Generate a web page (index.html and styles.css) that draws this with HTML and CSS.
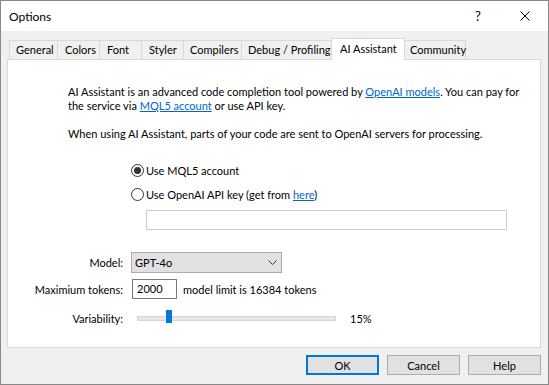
FILE: index.html
```html
<!DOCTYPE html>
<html>
<head>
<meta charset="utf-8">
<title>Options</title>
<link rel="stylesheet" href="styles.css">
</head>
<body>
<div class="window">
  <div class="titlebar">
    <span class="title">Options</span>
    <div class="tb-btns">
      <span class="tb-btn tb-help">?</span>
      <span class="tb-btn">
        <svg width="10" height="10" viewBox="0 0 10 10"><path d="M0.5 0.5 L9.5 9.5 M9.5 0.5 L0.5 9.5" stroke="#000" stroke-width="1" fill="none"/></svg>
      </span>
    </div>
  </div>
  <div class="body">
    <div class="tabs">
      <div class="tab t-general">General</div>
      <div class="tab t-colors">Colors</div>
      <div class="tab t-font">Font</div>
      <div class="tab t-styler">Styler</div>
      <div class="tab t-compilers">Compilers</div>
      <div class="tab t-debug">Debug / Profiling</div>
      <div class="tab t-ai active">AI Assistant</div>
      <div class="tab t-comm">Community</div>
    </div>
    <div class="panel">
      <div class="intro">
        <p class="p1">AI Assistant is an advanced code completion tool powered by <a href="#">OpenAI models</a>. You can pay for<br>the service via <a href="#">MQL5 account</a> or use API key.</p>
        <p class="p2">When using AI Assistant, parts of your code are sent to OpenAI servers for processing.</p>
      </div>
      <div class="auth">
        <div class="radio-row"><span class="radio checked"></span><span>Use MQL5 account</span></div>
        <div class="radio-row"><span class="radio"></span><span>Use OpenAI API key (get from <a href="#">here</a>)</span></div>
        <div class="keybox"></div>
      </div>
      <div class="form">
        <span class="lbl">Model:</span>
        <div class="select"><span>GPT-4o</span>
          <svg width="9" height="5" viewBox="0 0 9 5"><path d="M0.5 0.5 L4.5 4.5 L8.5 0.5" stroke="#333" stroke-width="1" fill="none"/></svg>
        </div>
        <span class="lbl">Maximium tokens:</span>
        <div class="tokens"><div class="num">2000</div><span>model limit is 16384 tokens</span></div>
        <span class="lbl">Variability:</span>
        <div class="slider-row">
          <div class="track"><div class="thumb" style="left:14.2%"></div></div>
          <span class="pct">15%</span>
        </div>
      </div>
    </div>
    <div class="buttons">
      <button class="btn btn-default">OK</button>
      <button class="btn">Cancel</button>
      <button class="btn">Help</button>
    </div>
  </div>
</div>
</body>
</html>
```
FILE: styles.css
```css
html, body {
  margin: 0;
  padding: 0;
}
body {
  font-family: Lato, "Liberation Sans", sans-serif;
  font-size: 11px;
  color: #000;
  background: #fff;
}
a {
  color: #0066cc;
  text-decoration: underline;
}
.window {
  width: 549px;
  height: 385px;
  box-sizing: border-box;
  border: 1px solid #888;
  display: flex;
  flex-direction: column;
  background: #f0f0f0;
}
.titlebar {
  height: 30px;
  flex: none;
  background: #fff;
  display: flex;
  align-items: center;
  justify-content: space-between;
}
.title {
  padding-left: 8px;
  font-size: 12px;
}
.tb-btns {
  display: flex;
  height: 30px;
}
.tb-btn {
  width: 46px;
  display: flex;
  align-items: center;
  justify-content: center;
}
.tb-help {
  font-size: 13px;
  padding-right: 1px;
}
.body {
  flex: 1;
  display: flex;
  flex-direction: column;
  padding: 7px 7px 9px 6px;
  min-height: 0;
}
.tabs {
  display: flex;
  align-items: flex-end;
  height: 21px;
  flex: none;
  padding-left: 2px;
}
.tab {
  box-sizing: border-box;
  height: 19px;
  border: 1px solid #d9d9d9;
  border-bottom: none;
  padding-left: 6px;
  line-height: 18px;
  margin-left: -1px;
  background: #f0f0f0;
  white-space: nowrap;
}
.t-general { margin-left: 0; width: 49px; }
.t-colors { width: 43px; padding-left: 7px; }
.t-font { width: 43px; padding-left: 7px; }
.t-styler { width: 43px; padding-left: 7px; }
.t-compilers { width: 59px; }
.t-debug { width: 91px; }
.t-ai { width: 74px; padding-left: 8px; }
.t-comm { width: 62px; padding-left: 5px; }
.tab.active {
  height: 22px;
  background: #fff;
  margin-bottom: -1px;
  position: relative;
  z-index: 1;
  line-height: 19px;
}
.panel {
  flex: 1;
  background: #fff;
  border: 1px solid #d9d9d9;
  min-height: 0;
}
.intro {
  padding: 25px 0 0 60px;
  line-height: 14px;
}
.intro p {
  margin: 0;
}
.intro .p2 {
  margin-top: 14px;
}
.auth {
  margin: 21px 0 0 123px;
}
.radio-row {
  display: flex;
  align-items: center;
  height: 16px;
  gap: 2px;
  margin-bottom: 8px;
}
.radio {
  width: 13px;
  height: 13px;
  box-sizing: border-box;
  border: 1px solid #333;
  border-radius: 50%;
  background: #fff;
  flex: none;
}
.radio.checked::after {
  content: "";
  display: block;
  width: 7px;
  height: 7px;
  margin: 2px;
  border-radius: 50%;
  background: #333;
}
.keybox {
  margin-left: 15px;
  width: 361px;
  height: 20px;
  box-sizing: border-box;
  border: 1px solid #cccccc;
  background: #fff;
}
.form {
  display: grid;
  grid-template-columns: 115px auto;
  grid-template-rows: 21px 20px 26px;
  column-gap: 8px;
  row-gap: 6px;
  margin-top: 22px;
  align-items: center;
}
.lbl {
  text-align: right;
  white-space: nowrap;
}
.select {
  width: 151px;
  height: 21px;
  box-sizing: border-box;
  border: 1px solid #adadad;
  background: #e1e1e1;
  display: flex;
  align-items: center;
  justify-content: space-between;
  padding: 0 4px 0 3px;
}
.tokens {
  display: flex;
  align-items: center;
  gap: 6px;
}
.num {
  width: 45px;
  height: 20px;
  box-sizing: border-box;
  border: 1px solid #7a7a7a;
  background: #fff;
  padding-left: 4px;
  line-height: 18px;
  margin-left: 1px;
}
.slider-row {
  display: flex;
  align-items: center;
}
.track {
  width: 199px;
  height: 5px;
  box-sizing: border-box;
  border: 1px solid #d6d6d6;
  background: #e7e7e7;
  margin-left: 6px;
  position: relative;
}
.thumb {
  position: absolute;
  top: -7px;
  width: 6px;
  height: 13px;
  background: #0078d7;
}
.pct {
  margin-left: 14px;
}
.buttons {
  display: flex;
  justify-content: flex-end;
  gap: 8px;
  margin-top: 7px;
  height: 20px;
  flex: none;
}
.btn {
  width: 73px;
  height: 20px;
  box-sizing: border-box;
  border: 1px solid #adadad;
  background: #e1e1e1;
  font-family: inherit;
  font-size: 11px;
  color: #000;
  padding: 0;
  margin: 0;
}
.btn-default {
  border: 2px solid #0078d7;
}
```
